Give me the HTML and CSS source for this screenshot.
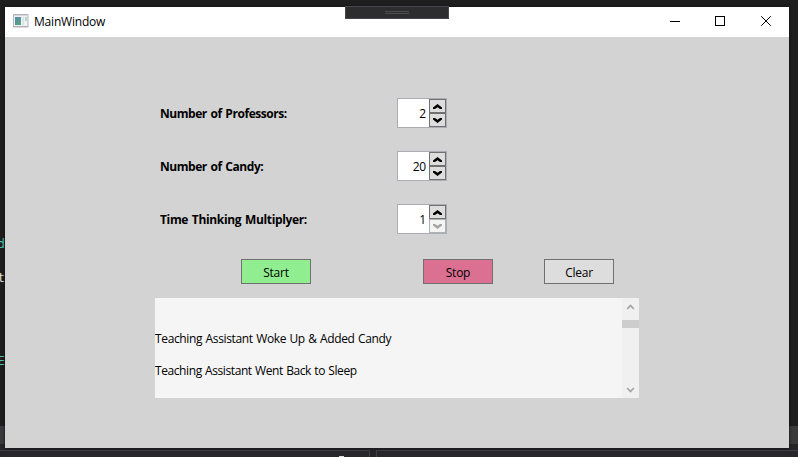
FILE: index.html
```html
<!DOCTYPE html>
<html lang="en">
<head>
<meta charset="utf-8">
<title>MainWindow</title>
<link rel="stylesheet" href="styles.css">
</head>
<body>
<div class="editor-bg">
  <span class="code code-d">d</span>
  <span class="code code-t">t</span>
  <span class="code code-e">E</span>
  <div class="status-strip"></div>
  <div class="dock"><div class="pane pane-left"><i class="tick"></i></div><div class="pane pane-right"></div></div>
</div>
<main class="window">
  <header class="titlebar">
    <svg class="app-icon" width="16" height="14" viewBox="0 0 16 14">
      <defs><linearGradient id="g" x1="0" y1="0" x2="1" y2="1"><stop offset="0" stop-color="#5684b4"/><stop offset="1" stop-color="#55ad72"/></linearGradient></defs>
      <rect x=".5" y=".5" width="14.5" height="12.5" fill="#f0f1f4" stroke="#b4b6bb"/>
      <path d="M1 1.5H15" stroke="#d3d5da"/>
      <rect x="2" y="3" width="6" height="8" fill="url(#g)"/>
      <rect x="9" y="3" width="2" height="8" fill="#dfe1e6"/>
      <rect x="12" y="3" width="2" height="4" fill="#b5d9c4"/>
      <path d="M1 12.5H15" stroke="#b0b2b8"/>
    </svg>
    <h1 class="title">MainWindow</h1>
    <div class="controls">
      <svg width="45" height="30" viewBox="0 0 45 30"><path d="M17 14.5H27" stroke="#000"/></svg>
      <svg width="45" height="30" viewBox="0 0 45 30"><rect x="17.5" y="9.5" width="9" height="9" fill="none" stroke="#000"/></svg>
      <svg width="45" height="30" viewBox="0 0 45 30"><path d="M18.2 9.2L27.8 18.8M27.8 9.2L18.2 18.8" stroke="#000"/></svg>
    </div>
    <div class="debug-bar"><i></i><i></i></div>
  </header>
  <section class="client">
    <div class="form">
      <div class="row"><span class="label l1">Number of Professors:</span>
        <div class="spinner"><span class="value">2</span><div class="steps">
          <button class="step"><svg width="9" height="5" viewBox="0 0 9 5"><path d="M4.5 0L9 3.6V5H7L4.5 3.2L2 5H0V3.6Z"/></svg></button>
          <button class="step"><svg width="9" height="5" viewBox="0 0 9 5"><path d="M4.5 5L9 1.4V0H7L4.5 1.8L2 0H0V1.4Z"/></svg></button></div></div></div>
      <div class="row"><span class="label l2">Number of Candy:</span>
        <div class="spinner"><span class="value">20</span><div class="steps">
          <button class="step"><svg width="9" height="5" viewBox="0 0 9 5"><path d="M4.5 0L9 3.6V5H7L4.5 3.2L2 5H0V3.6Z"/></svg></button>
          <button class="step"><svg width="9" height="5" viewBox="0 0 9 5"><path d="M4.5 5L9 1.4V0H7L4.5 1.8L2 0H0V1.4Z"/></svg></button></div></div></div>
      <div class="row"><span class="label l3">Time Thinking Multiplyer:</span>
        <div class="spinner"><span class="value">1</span><div class="steps">
          <button class="step"><svg width="9" height="5" viewBox="0 0 9 5"><path d="M4.5 0L9 3.6V5H7L4.5 3.2L2 5H0V3.6Z"/></svg></button>
          <button class="step" disabled><svg width="9" height="5" viewBox="0 0 9 5"><path d="M4.5 5L9 1.4V0H7L4.5 1.8L2 0H0V1.4Z"/></svg></button></div></div></div>
    </div>
    <div class="actions">
      <button class="btn start">Start</button>
      <button class="btn stop">Stop</button>
      <button class="btn clear">Clear</button>
    </div>
    <div class="log">
      <div class="lines">
        <p class="m1">Teaching Assistant Woke Up &amp; Added Candy</p>
        <p class="m2">Teaching Assistant Went Back to Sleep</p>
      </div>
      <div class="scrollbar">
        <svg width="17" height="17" viewBox="0 0 17 17"><path d="M5.2 11L8.5 7.5L11.8 11" fill="none" stroke="#a3a3a3" stroke-width="1.7"/></svg>
        <div class="thumb"></div>
        <svg class="down" width="17" height="17" viewBox="0 0 17 17"><path d="M5.2 7L8.5 10.5L11.8 7" fill="none" stroke="#a3a3a3" stroke-width="1.7"/></svg>
      </div>
    </div>
  </section>
</main>
</body>
</html>
```
FILE: styles.css
```css
* { box-sizing: border-box; }
body {
  margin: 0;
  width: 798px;
  height: 457px;
  overflow: hidden;
  padding: 7px 0 0 5px;
  background: #1e1e1e;
  font: 12px/16px "Open Sans", "Noto Sans", sans-serif;
  color: #000;
}
button { font: inherit; color: inherit; padding: 0; margin: 0; }
svg { display: block; flex: none; }

/* Editor visible behind the window */
.editor-bg { position: absolute; inset: 0; overflow: hidden; }
.code { position: absolute; font: 13px/16px "DejaVu Sans Mono", monospace; right: 793px; }
.code-d { top: 236px; color: #4ec9b0; }
.code-t { top: 270px; color: #dcdcdc; }
.code-e { top: 353px; color: #4ec9b0; }
.status-strip { position: absolute; left: 0; right: 0; top: 426px; height: 18px; background: #3a3a3d; }
.dock {
  position: absolute; left: 0; right: 0; top: 444px; height: 13px;
  padding-top: 6px; background: #252527; display: flex; gap: 6px;
}
.pane { border-top: 1px solid #3f3f46; background: #27272b; }
.pane-left { width: 370px; border-right: 1px solid #3f3f46; padding: 5px 0 0 339px; }
.pane-right { flex: 1; border-left: 1px solid #3f3f46; }
.tick { display: block; width: 5px; height: 1px; background: #e0e0e0; }

.window {
  position: relative; width: 784px; height: 441px;
  background: #d3d3d3; box-shadow: 0 0 3px #111;
}
.titlebar { position: relative; display: flex; align-items: center; height: 30px; padding-left: 8px; background: #fff; }
.app-icon { margin-bottom: 2px; }
.title { margin: 0 0 0 5px; font-size: 12px; font-weight: 400; letter-spacing: -0.2px; }
.controls { display: flex; margin: 0 1px 0 auto; }
.debug-bar {
  position: absolute; left: 340px; top: -1px; width: 104px; height: 13px;
  padding-top: 4px; border: 1px solid #46464b; background: #2d2d30;
}
.debug-bar i { display: block; width: 24px; height: 1px; margin: 0 auto 1px; background: #4c4c52; }

.client { padding: 61px 150px 0; }
.form { display: flex; flex-direction: column; gap: 23px; }
.row { display: flex; align-items: center; height: 30px; padding-left: 5px; }
.label { width: 237px; font-weight: 700; white-space: nowrap; padding-top: 2px; word-spacing: 1px; }
.l1 { letter-spacing: -0.45px; }
.l2 { letter-spacing: -0.45px; }
.l3 { letter-spacing: -0.35px; }
.spinner { display: flex; width: 50px; height: 30px; border: 1px solid #abadb3; background: #fff; }
.value { width: 31px; padding: 7px 3px 0 0; text-align: right; letter-spacing: -0.2px; }
.steps { width: 17px; }
.step {
  display: flex; width: 17px; height: 14px; align-items: center; justify-content: center;
  border: 1px solid #707070; background: #ddd;
}
.step:disabled { border-color: #adb2b5; background: #f4f4f4; }
.step:disabled path { fill: #a5a5a5; }

.actions { display: flex; margin-top: 25px; padding-left: 86px; }
.btn { width: 70px; height: 25px; padding-top: 2px; border: 1px solid #707070; background: #ddd; line-height: 16px; letter-spacing: -0.25px; }
.start { background: #90ee90; }
.stop { margin-left: 112px; background: #db7093; }
.clear { margin-left: 51px; }

.log { display: flex; height: 100px; margin-top: 14px; background: #f5f5f5; }
.lines { flex: 1; padding-top: 33px; white-space: nowrap; }
.lines p { margin: 0 0 16px; word-spacing: 0.6px; }
.m1 { letter-spacing: -0.35px; }
.m2 { letter-spacing: -0.41px; }
.scrollbar { display: flex; flex-direction: column; width: 17px; background: #f0f0f0; }
.thumb { height: 8px; margin-top: 5px; background: #cdcdcd; }
.down { margin-top: auto; }
```
